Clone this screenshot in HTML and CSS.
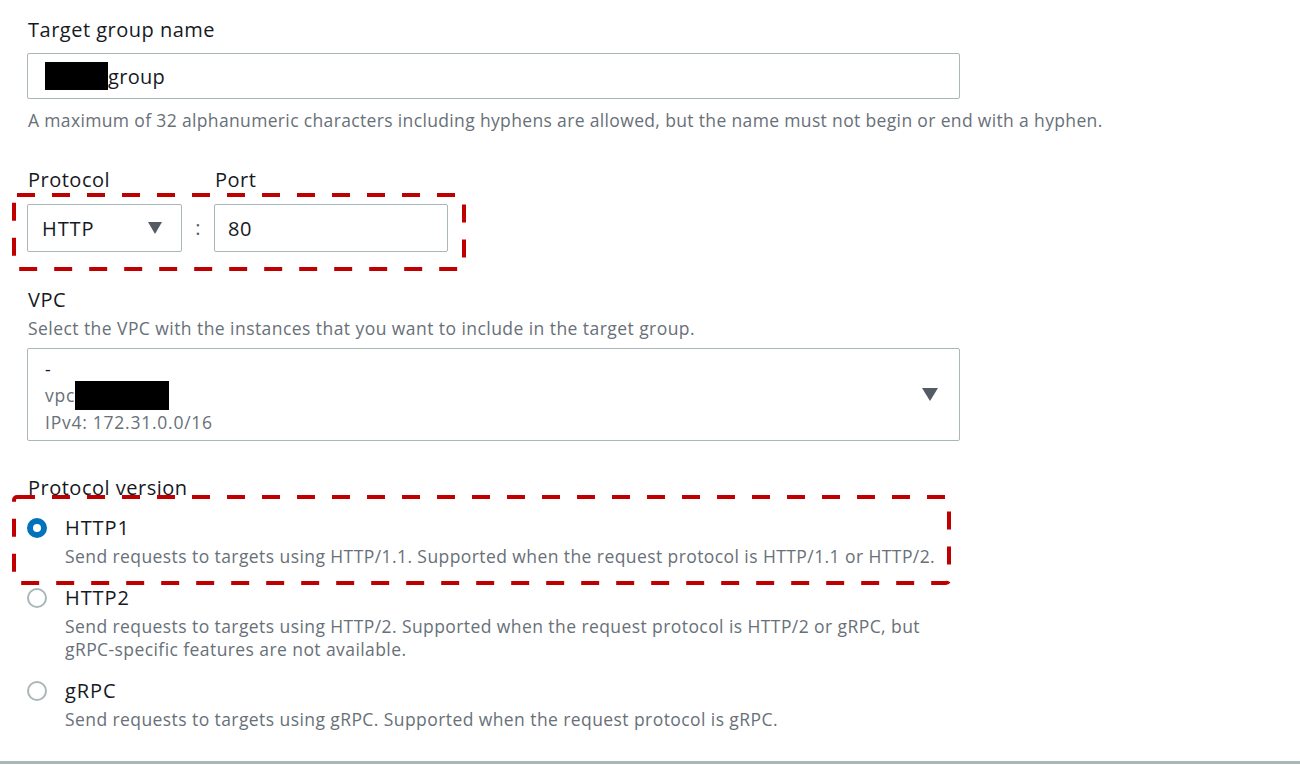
FILE: index.html
```html
<!DOCTYPE html>
<html>
<head>
<meta charset="utf-8">
<link rel="stylesheet" href="styles.css">
</head>
<body>
<div class="page">
  <div class="form">
    <div class="field">
      <div class="label">Target group name</div>
      <div class="input wide"><span class="redact r1"></span>group</div>
      <div class="hint">A maximum of 32 alphanumeric characters including hyphens are allowed, but the name must not begin or end with a hyphen.</div>
    </div>

    <div class="field proto">
      <div class="proto-row">
        <div class="col col-proto">
          <div class="label">Protocol</div>
          <div class="select small">
            <span>HTTP</span>
            <svg class="caret" width="14" height="12" viewBox="0 0 14 12"><path d="M0 0H14L7 12Z" fill="#545b64"/></svg>
          </div>
        </div>
        <div class="colon">:</div>
        <div class="col col-port">
          <div class="label">Port</div>
          <div class="input port">80</div>
        </div>
      </div>
      <svg class="dash dash1" width="460" height="84" viewBox="0 0 460 84"><rect x="2" y="2" width="450" height="74" rx="3" fill="none" stroke="#c00000" stroke-width="4" stroke-dasharray="18 17"/></svg>
    </div>

    <div class="field vpc">
      <div class="label">VPC</div>
      <div class="desc">Select the VPC with the instances that you want to include in the target group.</div>
      <div class="select vpc-select">
        <div class="vpc-lines">
          <div class="vpc-name">-</div>
          <div class="vpc-id">vpc-<span class="redact r2"></span></div>
          <div class="vpc-id">IPv4: 172.31.0.0/16</div>
        </div>
        <svg class="caret" width="16" height="13" viewBox="0 0 16 13"><path d="M0 0H16L8 13Z" fill="#545b64"/></svg>
      </div>
    </div>

    <div class="field pv">
      <div class="label">Protocol version</div>
      <div class="options">
        <div class="option">
          <span class="radio checked"></span>
          <div class="opt-text">
            <div class="opt-label">HTTP1</div>
            <div class="opt-desc">Send requests to targets using HTTP/1.1. Supported when the request protocol is HTTP/1.1 or HTTP/2.</div>
          </div>
        </div>
        <div class="option">
          <span class="radio"></span>
          <div class="opt-text">
            <div class="opt-label">HTTP2</div>
            <div class="opt-desc">Send requests to targets using HTTP/2. Supported when the request protocol is HTTP/2 or gRPC, but<br>gRPC-specific features are not available.</div>
          </div>
        </div>
        <div class="option">
          <span class="radio"></span>
          <div class="opt-text">
            <div class="opt-label">gRPC</div>
            <div class="opt-desc">Send requests to targets using gRPC. Supported when the request protocol is gRPC.</div>
          </div>
        </div>
      </div>
      <svg class="dash dash2" width="944" height="94" viewBox="0 0 944 94"><rect x="2" y="2" width="935" height="86" rx="3" fill="none" stroke="#c00000" stroke-width="4" stroke-dasharray="18 17"/></svg>
    </div>
  </div>
  <div class="footer"></div>
</div>
</body>
</html>
```

FILE: styles.css
```css
* { box-sizing: border-box; }
html, body { margin: 0; padding: 0; background: #fff; }
body {
  font-family: "Open Sans", "Noto Sans", sans-serif;
  color: #16191f;
  width: 1300px;
  height: 765px;
  overflow: hidden;
}
.page {
  height: 765px;
  display: flex;
  flex-direction: column;
}
.form {
  flex: 1;
  padding: 18px 0 0 27px;
}
.field { position: relative; }
.label {
  font-size: 20px;
  letter-spacing: 0.5px;
  line-height: 24px;
  padding-left: 1px;
  color: #16191f;
}
.input, .select {
  border: 1px solid #aab7b8;
  border-radius: 2px;
  background: #fff;
  font-size: 20px;
  letter-spacing: 0.5px;
  color: #16191f;
  display: flex;
  align-items: center;
}
.input.wide {
  width: 933px;
  height: 46px;
  margin-top: 11px;
  padding-left: 17px;
  letter-spacing: 0.3px;
}
.redact {
  display: inline-block;
  background: #000;
}
.r1 { width: 63px; height: 28px; }
.hint {
  margin-top: 9px;
  font-size: 17.5px;
  letter-spacing: 0.35px;
  line-height: 24px;
  color: #687078;
  padding-left: 1px;
}
.proto { margin-top: 36px; }
.proto-row {
  display: flex;
  align-items: flex-end;
}
.col .label { margin-bottom: 12px; }
.select.small {
  width: 155px;
  height: 48px;
  padding: 0 19px 0 14px;
  justify-content: space-between;
  letter-spacing: 0.9px;
}
.colon {
  width: 32px;
  height: 48px;
  line-height: 48px;
  text-align: center;
  font-size: 20px;
  color: #545b64;
}
.input.port {
  width: 234px;
  height: 48px;
  padding-left: 13px;
}
.dash { position: absolute; pointer-events: none; }
.dash1 { left: -15px; top: 25px; }
.vpc { margin-top: 36px; }
.desc {
  margin-top: 4px;
  font-size: 17.5px;
  letter-spacing: 0.44px;
  line-height: 24px;
  color: #687078;
  padding-left: 1px;
}
.vpc-select {
  margin-top: 8px;
  width: 933px;
  height: 93px;
  padding: 0 21px 0 17px;
  justify-content: space-between;
  letter-spacing: 0;
}
.vpc-lines { font-size: 17.5px; letter-spacing: 0.75px; line-height: 24.5px; padding-top: 2px; }
.vpc-name { color: #16191f; }
.vpc-id { color: #687078; display: flex; align-items: center; }
.r2 { width: 94px; height: 29px; margin-left: -6px; }
.pv { margin-top: 35px; }
.options { margin-top: 16px; display: flex; flex-direction: column; gap: 18px; }
.option { display: flex; align-items: flex-start; }
.radio {
  width: 20px;
  height: 20px;
  border-radius: 50%;
  border: 2px solid #aab7b8;
  margin-top: 2px;
  flex: none;
  background: #fff;
}
.radio.checked {
  border: 6.5px solid #0073bb;
}
.opt-text { margin-left: 18px; }
.opt-label { font-size: 20px; letter-spacing: 0.9px; line-height: 24px; color: #16191f; }
.opt-desc {
  margin-top: 5px;
  font-size: 17.5px;
  letter-spacing: 0.42px;
  line-height: 23px;
  color: #687078;
}
.dash2 { left: -15px; top: 19px; }
.footer {
  height: 4px;
  border-top: 3px solid #aab7b8;
  flex: none;
}
```
